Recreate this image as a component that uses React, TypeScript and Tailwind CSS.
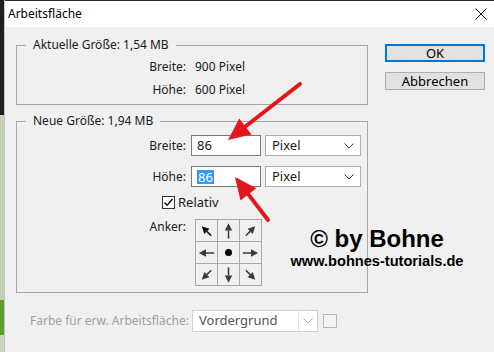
import React from "react";

function Chevron({ color = "#333" }: { color?: string }) {
  return (
    <svg width="10" height="6" viewBox="0 0 10 6">
      <path d="M0.5 0.5 L5 5 L9.5 0.5" fill="none" stroke={color} strokeWidth="1" />
    </svg>
  );
}

function AnchorArrow({ dx, dy, dark }: { dx: number; dy: number; dark?: boolean }) {
  const len = dx !== 0 && dy !== 0 ? 7 : 8;
  const n = Math.hypot(dx, dy);
  const ux = dx / n;
  const uy = dy / n;
  const c = 11;
  const sx = c - ux * len;
  const sy = c - uy * len;
  const tx = c + ux * len;
  const ty = c + uy * len;
  const hl = 7.5;
  const hw = 3.8;
  const bx = tx - ux * hl;
  const by = ty - uy * hl;
  const px = -uy;
  const py = ux;
  const col = dark ? "#111" : "#3a3a3a";
  return (
    <svg width="22" height="22" viewBox="0 0 22 22">
      <line x1={sx} y1={sy} x2={bx} y2={by} stroke={col} strokeWidth="1.6" />
      <polygon
        points={`${tx},${ty} ${bx + px * hw},${by + py * hw} ${bx - px * hw},${by - py * hw}`}
        fill={col}
      />
    </svg>
  );
}

function Cell({ children }: { children?: React.ReactNode }) {
  return (
    <div className="w-[22px] h-[22px] flex items-center justify-center border-r border-b border-[#a8a8a8]">
      {children}
    </div>
  );
}

export default function App() {
  return (
    <div className="w-[494px] h-[352px] overflow-hidden flex bg-[#f0f0f0] font-['Noto_Sans',sans-serif] text-[12px] text-[#1a1a1a] relative">
      {/* background strip left */}
      <div className="w-[4px] flex flex-col">
        <div className="h-[115px] bg-[#1e1e1e]" />
        <div className="h-[185px] bg-[#c2d0b4]" />
        <div className="h-[35px] bg-[#5b9e2e]" />
        <div className="flex-1 bg-[#c9d6bd]" />
      </div>
      <div className="flex-1 flex flex-col border-l border-[#c4c4c4]">
        {/* title bar */}
        <div className="h-[27px] bg-white border-t border-[#2a2a2a] flex items-center justify-between pl-[3px] pr-[7px]">
          <span className="text-[12px] leading-[16px] text-black">Arbeitsfläche</span>
          <svg width="12" height="12" viewBox="0 0 12 12">
            <path d="M0.5 0.5 L11.5 11.5 M11.5 0.5 L0.5 11.5" stroke="#111" strokeWidth="1" />
          </svg>
        </div>
        {/* body */}
        <div className="flex pl-[11px] pt-[10px]">
          <div className="w-[352px] flex flex-col">
            {/* group 1 */}
            <fieldset className="border border-[#a6a6a6] px-0 pb-[5px] m-0">
              <legend className="ml-[9px] px-[7px] leading-[16px]">Aktuelle Größe: 1,54 MB</legend>
              <div className="flex flex-col gap-[5px] pt-[5px]">
                <div className="flex leading-[18px]">
                  <span className="w-[169px] text-right">Breite:</span>
                  <span className="ml-[9px]">900 Pixel</span>
                </div>
                <div className="flex leading-[18px]">
                  <span className="w-[169px] text-right">Höhe:</span>
                  <span className="ml-[9px]">600 Pixel</span>
                </div>
              </div>
            </fieldset>
            {/* group 2 */}
            <fieldset className="border border-[#a6a6a6] mt-[8px] pb-[6px]">
              <legend className="ml-[9px] px-[7px] leading-[16px]">Neue Größe: 1,94 MB</legend>
              <div className="flex flex-col pt-[6px]">
                <div className="flex items-center h-[21px]">
                  <span className="w-[169px] text-right">Breite:</span>
                  <div className="ml-[5px] w-[70px] h-[21px] bg-white border border-[#7a7a7a] flex items-center pl-[5px] text-[13px]">
                    86
                  </div>
                  <div className="ml-[4px] w-[96px] h-[21px] bg-white border border-[#adadad] flex items-center justify-between pl-[6px] pr-[6px] text-[13px]">
                    <span>Pixel</span>
                    <Chevron />
                  </div>
                </div>
                <div className="flex items-center h-[21px] mt-[10px]">
                  <span className="w-[169px] text-right">Höhe:</span>
                  <div className="ml-[5px] w-[70px] h-[21px] bg-white border border-[#7a7a7a] flex items-center pl-[5px] text-[13px]">
                    <span className="bg-[#3399ff] text-white leading-[14px] px-[1px]">86</span>
                  </div>
                  <div className="ml-[4px] w-[96px] h-[21px] bg-white border border-[#adadad] flex items-center justify-between pl-[6px] pr-[6px] text-[13px]">
                    <span>Pixel</span>
                    <Chevron />
                  </div>
                </div>
                <div className="flex items-center h-[14px] mt-[8px] pl-[145px]">
                  <div className="w-[13px] h-[13px] border border-[#333] bg-white flex items-center justify-center">
                    <svg width="11" height="11" viewBox="0 0 11 11">
                      <path d="M1.5 5.5 L4.2 8.3 L9.5 2" fill="none" stroke="#111" strokeWidth="1.4" />
                    </svg>
                  </div>
                  <span className="ml-[3px] text-[13px] leading-[14px]">Relativ</span>
                </div>
                <div className="flex items-start mt-[10px]">
                  <span className="w-[169px] text-right leading-[14px] mt-[1px]">Anker:</span>
                  <div className="ml-[9px] border-l border-t border-[#a8a8a8] grid grid-cols-3">
                    <Cell><AnchorArrow dx={-1} dy={-1} dark /></Cell>
                    <Cell><AnchorArrow dx={0} dy={-1} /></Cell>
                    <Cell><AnchorArrow dx={1} dy={-1} /></Cell>
                    <Cell><AnchorArrow dx={-1} dy={0} /></Cell>
                    <Cell><div className="w-[7px] h-[7px] rounded-full bg-black" /></Cell>
                    <Cell><AnchorArrow dx={1} dy={0} /></Cell>
                    <Cell><AnchorArrow dx={-1} dy={1} /></Cell>
                    <Cell><AnchorArrow dx={0} dy={1} /></Cell>
                    <Cell><AnchorArrow dx={1} dy={1} /></Cell>
                  </div>
                </div>
              </div>
            </fieldset>
            {/* bottom row */}
            <div className="flex items-center mt-[17px] pl-[14px]">
              <span className="text-[#a0a0a0] w-[162px]">Farbe für erw. Arbeitsfläche:</span>
              <div className="w-[126px] h-[22px] bg-white border border-[#d0d0d0] flex items-center">
                <span className="flex-1 pl-[6px] text-[13px] text-[#555]">Vordergrund</span>
                <div className="w-[19px] h-full border-l border-[#e4e4e4] flex items-center justify-center">
                  <Chevron color="#aaa" />
                </div>
              </div>
              <div className="ml-[5px] w-[14px] h-[14px] border border-[#b8b8b8] bg-[#f4f4f4]" />
            </div>
          </div>
          {/* buttons */}
          <div className="ml-[17px] mt-[7px] flex flex-col gap-[10px] w-[100px]">
            <button className="h-[18px] border-2 border-[#0078d7] bg-[#e1e1e1] text-[13px] leading-[14px] text-black">
              OK
            </button>
            <button className="h-[18px] border border-[#adadad] bg-[#e1e1e1] text-[13px] leading-[14px] text-black">
              Abbrechen
            </button>
          </div>
        </div>
      </div>

      {/* watermark */}
      <div className="absolute left-[284px] top-[226px] w-[186px] flex flex-col items-center font-['Liberation_Sans',Arial,sans-serif] font-bold text-black">
        <span className="text-[24px] leading-[26px]">© by Bohne</span>
        <span className="text-[14.6px] leading-[18px]">www.bohnes-tutorials.de</span>
      </div>

      {/* red arrows */}
      <svg className="absolute left-0 top-0 pointer-events-none" width="494" height="352" viewBox="0 0 494 352">
        <line x1="300" y1="84" x2="245.4" y2="126.5" stroke="#e3161b" strokeWidth="4" strokeLinecap="round" />
        <polygon points="228,140 251.5,134.4 239.3,118.6" fill="#e3161b" />
        <line x1="268" y1="220" x2="248.4" y2="194.4" stroke="#e3161b" strokeWidth="4" strokeLinecap="round" />
        <polygon points="235,177 256.3,188.3 240.5,200.5" fill="#e3161b" />
      </svg>
    </div>
  );
}
